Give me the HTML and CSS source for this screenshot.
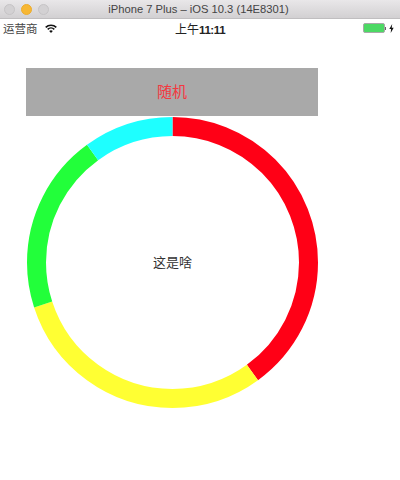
FILE: index.html
```html
<!DOCTYPE html>
<html lang="zh">
<head>
<meta charset="utf-8">
<title>iPhone 7 Plus</title>
<link rel="stylesheet" href="styles.css">
</head>
<body>
<header class="titlebar">
  <div class="lights"><span class="light"></span><span class="light light-min"></span><span class="light"></span></div>
  <div class="title">iPhone 7 Plus – iOS 10.3 (14E8301)</div>
</header>
<div class="statusbar">
  <div class="status-left">
    <span>运营商</span>
    <svg class="wifi" width="12" height="9" viewBox="0 0 12 9"><path d="M0.7 3.4a7.6 7.6 0 0 1 10.6 0" fill="none" stroke="#111" stroke-width="1.6"/><path d="M2.7 5.3a4.8 4.8 0 0 1 6.6 0" fill="none" stroke="#111" stroke-width="1.6"/><path d="M4.2 7a2.6 2.6 0 0 1 3.6 0L6 8.9z" fill="#111"/></svg>
  </div>
  <div class="clock">上午<b>11:11</b></div>
  <div class="status-right">
    <span class="battery"></span><span class="nub"></span>
    <svg class="bolt" width="5" height="9" viewBox="0 0 5 9"><path d="M3.2 0L0.3 5H2.1L1.7 9L4.7 3.8H2.7z" fill="#111"/></svg>
  </div>
</div>
<main class="screen">
  <div class="random">随机</div>
  <div class="chart">
    <svg class="ring" width="291" height="291" viewBox="0 0 291 291">
      <g fill="none" stroke-width="19">
        <circle cx="145.5" cy="145.5" r="136" pathLength="100" stroke="#ff0016" stroke-dasharray="40 60" stroke-dashoffset="25"/>
        <circle cx="145.5" cy="145.5" r="136" pathLength="100" stroke="#ffff33" stroke-dasharray="30 70" stroke-dashoffset="-15"/>
        <circle cx="145.5" cy="145.5" r="136" pathLength="100" stroke="#22ff3a" stroke-dasharray="20 80" stroke-dashoffset="-45"/>
        <circle cx="145.5" cy="145.5" r="136" pathLength="100" stroke="#1effff" stroke-dasharray="10 90" stroke-dashoffset="-65"/>
      </g>
    </svg>
    <div class="chart-label">这是啥</div>
  </div>
</main>
</body>
</html>
```
FILE: styles.css
```css
* { box-sizing: border-box; }
html, body { margin: 0; padding: 0; }
body { width: 400px; height: 480px; overflow: hidden; background: #fff; font-family: "Liberation Sans", "Noto Sans CJK SC", sans-serif; color: #333; }
.titlebar { height: 19px; background: linear-gradient(#e9e7e9, #d2d0d2); border-bottom: 1px solid #c0bec0; display: flex; align-items: center; justify-content: center; position: relative; padding-right: 3px; }
.lights { position: absolute; left: 4px; top: 4px; display: flex; gap: 6px; }
.light { width: 11px; height: 11px; border-radius: 50%; background: #d3d1d3; border: 1px solid #c6c4c6; }
.light-min { background: #f7b733; border-color: #ecac2e; }
.title { font-size: 11.2px; color: #444; }
.statusbar { height: 20px; display: flex; align-items: center; justify-content: space-between; position: relative; font-size: 11.5px; }
.status-left { display: flex; align-items: center; gap: 7px; padding-left: 3px; margin-top: -2px; color: #444; }
.clock { position: absolute; left: 175px; top: 1px; font-size: 12px; color: #222; }
.clock b { font-weight: 600; font-size: 11.5px; letter-spacing: -0.4px; }
.status-right { display: flex; align-items: center; padding-right: 6px; margin-top: -2px; }
.battery { width: 22px; height: 10px; background: #4cd964; border: 1px solid #a8a8a8; border-radius: 2px; }
.nub { width: 1px; height: 3px; background: #666; margin-right: 3px; }
.screen { display: flex; flex-direction: column; padding: 29px 0 0 26px; }
.random { width: 292px; height: 48px; background: #a9a9a9; color: #f4383f; font-size: 15px; display: flex; align-items: center; justify-content: center; padding-bottom: 3px; margin-bottom: 1px; }
.chart { position: relative; width: 291px; height: 291px; margin-left: 1px; }
.ring { display: block; }
.chart-label { position: absolute; inset: 0; display: flex; align-items: center; justify-content: center; padding-bottom: 3px; font-size: 13px; color: #333; }
```
